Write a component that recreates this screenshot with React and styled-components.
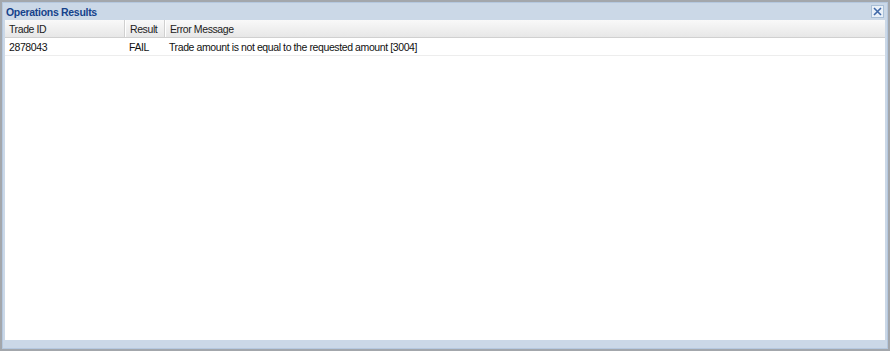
import React from 'react';
import styled, { createGlobalStyle } from 'styled-components';

const Global = createGlobalStyle`
  html, body { margin: 0; padding: 0; }
  body {
    background: #a3a7ac;
    font-family: 'Liberation Sans', Arial, sans-serif;
    width: 890px;
    height: 351px;
    overflow: hidden;
  }
`;

const Desk = styled.div`
  width: 890px;
  height: 351px;
  box-sizing: border-box;
  padding: 2px;
  display: flex;
`;

const Win = styled.div`
  flex: 1;
  display: flex;
  flex-direction: column;
  background: #cbd8e7;
  border: 1px solid #b5c8df;
  box-sizing: border-box;
`;

const TitleBar = styled.div`
  height: 17px;
  display: flex;
  align-items: center;
  justify-content: space-between;
  padding: 0 3px 0 3px;
`;

const Title = styled.span`
  font-weight: bold;
  font-size: 10.5px;
  letter-spacing: -0.3px;
  color: #15428b;
`;

const Close = styled.div`
  width: 13px;
  height: 13px;
  box-sizing: border-box;
  border: 1px solid #a9bfd6;
  background: #e9f0f8;
  display: flex;
  align-items: center;
  justify-content: center;
`;

const Body = styled.div`
  flex: 1;
  margin: 0 2px 8px 2px;
  background: #fff;
  display: flex;
  flex-direction: column;
`;

const Row = styled.div`
  display: grid;
  grid-template-columns: 120px 40px 1fr;
  height: 17px;
  background: ${p => (p.$head ? 'linear-gradient(#f9f9f9, #e7e7e7)' : '#fff')};
  border-bottom: 1px solid ${p => (p.$head ? '#d0d0d0' : '#ededed')};
`;

const Cell = styled.div`
  font-size: 10.5px;
  letter-spacing: -0.4px;
  color: ${p => (p.$head ? '#222' : '#111')};
  padding-left: 4px;
  display: flex;
  align-items: center;
  white-space: nowrap;
  border-right: ${p => (p.$head && !p.$last ? '1px solid #d0d0d0' : 'none')};
  border-left: ${p => (p.$head && !p.$first ? '1px solid #fff' : 'none')};
`;

export default function App() {
  return (
    <>
      <Global />
      <Desk>
        <Win>
          <TitleBar>
            <Title>Operations Results</Title>
            <Close>
              <svg width="9" height="9" viewBox="0 0 9 9">
                <path d="M1 1 L8 8 M8 1 L1 8" stroke="#3f68a8" strokeWidth="1.6" />
              </svg>
            </Close>
          </TitleBar>
          <Body>
            <Row $head>
              <Cell $head $first>Trade ID</Cell>
              <Cell $head>Result</Cell>
              <Cell $head $last>Error Message</Cell>
            </Row>
            <Row>
              <Cell>2878043</Cell>
              <Cell>FAIL</Cell>
              <Cell>Trade amount is not equal to the requested amount [3004]</Cell>
            </Row>
          </Body>
        </Win>
      </Desk>
    </>
  );
}
